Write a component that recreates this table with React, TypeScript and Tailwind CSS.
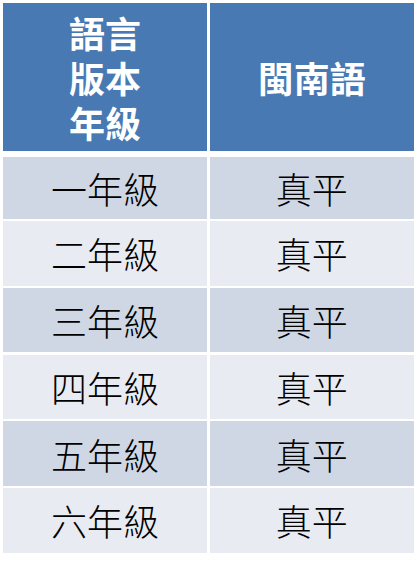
import React from "react";

const rows = ["一年級", "二年級", "三年級", "四年級", "五年級", "六年級"];

export default function App() {
  return (
    <div
      className="w-[420px] h-[567px] bg-white pl-[3px] pt-[3px]"
      style={{ fontFamily: '"Noto Sans CJK TC", "Noto Sans CJK SC", sans-serif' }}
    >
      <div className="w-[411px] flex flex-col">
        <div className="grid grid-cols-2 gap-x-[2.5px] h-[147.5px]">
          <div className="bg-[#4879b2] flex flex-col items-center justify-center gap-y-[9px]">
            <div className="text-white font-bold text-[36px] leading-[36px]">語言</div>
            <div className="text-white font-bold text-[36px] leading-[36px]">版本</div>
            <div className="text-white font-bold text-[36px] leading-[36px]">年級</div>
          </div>
          <div className="bg-[#4879b2] flex items-center justify-center">
            <div className="text-white font-bold text-[36px] leading-[36px]">閩南語</div>
          </div>
        </div>
        <div className="flex flex-col gap-y-[2.1px] mt-[6px]">
          {rows.map((r, i) => (
            <div
              key={r}
              className={`grid grid-cols-2 gap-x-[2.5px] ${i === 0 ? "h-[62.4px]" : "h-[64.7px]"}`}
            >
              <div
                className={`${i % 2 === 0 ? "bg-[#cfd7e5]" : "bg-[#e8ebf2]"} flex items-center justify-center text-black font-light text-[36px] leading-none`}
              >
                {r}
              </div>
              <div
                className={`${i % 2 === 0 ? "bg-[#cfd7e5]" : "bg-[#e8ebf2]"} flex items-center justify-center text-black font-light text-[36px] leading-none`}
              >
                真平
              </div>
            </div>
          ))}
        </div>
      </div>
    </div>
  );
}
